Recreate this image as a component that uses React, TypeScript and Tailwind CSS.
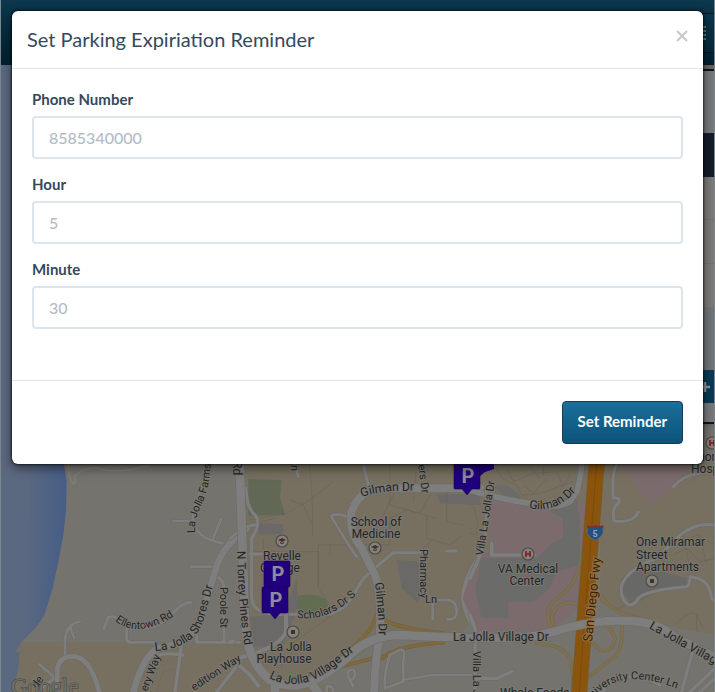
import type { ReactNode } from "react";

const LINE = "#6b6a65";
const ROAD = "#7e7e7e";

function Road({ d, w = 12, color = ROAD, edge = LINE }: { d: string; w?: number; color?: string; edge?: string }) {
  return (
    <g fill="none" strokeLinecap="round" strokeLinejoin="round">
      <path d={d} stroke={edge} strokeWidth={w + 3} />
      <path d={d} stroke={color} strokeWidth={w} />
    </g>
  );
}

function Curve({ id, d, size = 12, fill = "#242424", children }: { id: string; d: string; size?: number; fill?: string; children: ReactNode }) {
  return (
    <>
      <path id={id} d={d} fill="none" stroke="none" />
      <text fontSize={size} fill={fill}>
        <textPath href={"#" + id}>{children}</textPath>
      </text>
    </>
  );
}

function Pin({ x, y }: { x: number; y: number }) {
  return (
    <g transform={`translate(${x} ${y})`}>
      <path d="M1 0H25Q26 0 26 1V25Q26 26 25 26H18L13 32L8 26H1Q0 26 0 25V1Q0 0 1 0Z" fill="#21007d" stroke="#180060" strokeWidth="0.6" />
      <text x="14" y="20" textAnchor="middle" fontSize="20" fontWeight="700" fill="#8d8b9c" stroke="none">P</text>
    </g>
  );
}

function Spot({ x, y, kind }: { x: number; y: number; kind: "school" | "place" | "hospital" }) {
  return (
    <g transform={`translate(${x} ${y})`}>
      <circle r="6" fill="#84827f" stroke="#4d4c49" strokeWidth="1.2" />
      {kind === "school" && <path d="M-4 -1L0 -3L4 -1L0 1ZM-2 1V2Q0 4 2 2V1L0 2Z" fill="#4a3023" />}
      {kind === "place" && <rect x="-2" y="-2" width="4" height="4" fill="#4a3023" />}
      {kind === "hospital" && <path d="M-2 -3V3M2 -3V3M-2 0H2" stroke="#8b1518" strokeWidth="1.6" fill="none" />}
    </g>
  );
}

function CampusMap() {
  return (
    <svg className="absolute inset-0 h-full w-full" viewBox="0 65 715 627" preserveAspectRatio="xMinYMin slice" aria-label="Map of La Jolla" role="img">
      <defs>
        <linearGradient id="sea" x1="0" x2="1" y1="0.2" y2="0.5">
          <stop offset="0.5" stopColor="#5b6980" />
          <stop offset="1" stopColor="#485e87" />
        </linearGradient>
      </defs>
      <rect y="65" width="715" height="627" fill="#75736d" />
      <g transform="translate(0 455) scale(0.33333)">
        <path d="M0 -1170H192V30L200 80L198 170L190 240L175 320L158 400L133 480L110 515L65 560L48 590L60 590L55 640L40 711H0Z" fill="url(#sea)" />
        <path d="M65 562H740L780 600L870 690H1000V711H42L56 640L60 590L50 590Z" fill="#777060" />
        <path d="M735 0H1800V150L1350 560L1170 540L1000 650L860 690L750 590L730 300Z" fill="#777060" />
        <path d="M1800 0H2145V540L1880 490L1800 440Z" fill="#777060" />
      </g>

      {/* West coast */}
      <g transform="translate(0 455) scale(0.33333)">
        <path d="M205 30Q205 70 220 85Q232 80 222 66Q240 42 285 38Q350 60 450 30" stroke="#7f7d78" strokeWidth="5" fill="none" />
        <Road d="M622 0C625 90 578 130 578 195Q585 250 670 265M520 198H575M663 192L640 250M572 335H642" w={8} />
        <Road d="M312 520L325 487Q345 480 362 500Q440 540 490 500L530 463Q550 445 572 442M380 520V555L388 562H460M590 540V562H720M640 362Q672 368 672 400V560" w={9} />
        <Road d="M195 600V555Q200 505 240 500M210 515L223 550M118 628L165 668M165 668L125 700" w={8} />
        <Road d="M172 711V650Q172 605 218 604Q270 604 298 711" w={14} />
        <Road d="M545 565L525 711M450 610Q480 590 548 600M720 620L650 711M720 560" w={10} />
        <path d="M465 670Q470 620 530 618M470 711L490 650L525 640M485 630L515 665" stroke={LINE} strokeWidth="2" fill="none" />
        <Road d="M400 711Q430 600 475 580Q570 565 600 500L645 350Q660 280 740 220" w={20} />
      </g>

      {/* Campus */}
      <g transform="translate(230 455) scale(0.33333)">
        <path d="M55 72L155 75L150 130L165 180L55 182Z" fill="#626856" />
        <path d="M190 455L205 422Q260 412 290 435L298 470L235 478Z" fill="#626c50" />
        <path d="M85 205L160 208L158 238H85ZM60 485L160 480L200 370L205 450L160 570L70 575ZM500 315L575 320L590 410L560 440L515 400ZM620 118H750V150L630 145Z" fill="#6a6967" />
        <path d="M60 195L170 175L240 135L310 80M180 135L220 150L245 205M240 30L248 160V245M90 200L140 190M265 270H380M265 270V400L300 450M300 300V270M60 290H265V390M100 250V390M400 270H480V190L530 165L620 190M590 180V250L660 270L700 240M610 250L570 290M480 30V150L570 175L600 120M650 110V200L700 210M180 570L250 520L345 455M155 570V640M130 600L75 640M560 30L550 140M500 100L450 200" stroke="#69645a" strokeWidth="2" fill="none" />
        <Road d="M48 100Q50 160 75 180Q95 205 65 250V430Q70 480 150 478H300Q350 460 370 420L400 370L440 335L490 293H570M650 288H678M0 250L45 215L75 210M60 297H95" w={9} />
        <Road d="M195 30L205 65M400 30L415 90" w={9} />
        <Road d="M380 305Q365 285 350 260L305 187Q300 178 325 178L355 185" w={8} />
        <Road d="M608 435H650Q680 435 680 470Q680 495 652 493M608 435V493" w={8} />
        <Road d="M168 470V530Q150 580 20 610M20 625L60 660L85 692M0 562L10 560" w={12} />
        <Road d="M440 480Q420 550 310 620L240 665M450 490Q500 520 640 535M455 610Q500 570 640 563M310 640L450 605" w={9} color="#81683b" edge="#70603f" />
        <Road d="M500 590Q530 570 520 620V680L465 700Q460 660 480 600ZM515 675L610 660H750M370 695L355 665Q350 640 370 645Q385 660 360 680M290 711V695Q310 690 310 711" w={8} />
        <Road d="M750 300Q700 380 700 430Q710 500 750 530M735 540V711" w={14} />
        <Road d="M750 100H460Q390 100 365 170Q355 230 395 280L430 350Q455 400 450 540Q435 610 432 720" w={24} />
        <Road d="M28 0L45 500Q50 620 120 675Q180 705 240 680Q310 650 370 590Q430 540 510 540Q630 548 750 548M135 680V720M240 680L270 720" w={26} />
      </g>

      {/* Medical center and freeway */}
      <g transform="translate(470 455) scale(0.33333)">
        <path d="M60 115L175 150L260 140H350L330 450L250 530H20L-22 430L20 300L60 290Z" fill="#7b6b6c" />
        <path d="M455 30H660L625 90L540 148L500 95Z" fill="#7b6b6c" />
        <path d="M35 310H205L245 265L280 250V190L240 170L315 105L330 200V330L260 350L240 400L190 440H115V490H35L15 400ZM70 95L110 90L155 125L130 140Z" fill="#6b6b69" />
        <path d="M455 370Q510 315 580 350L650 370V400L560 410L490 450L455 410Z" fill="#686866" />
        <path d="M75 30Q90 80 140 90L155 120Q220 120 250 100L310 80M110 40L130 80L190 55L260 50L280 95L300 60M160 90L190 115L230 70M220 30V60M180 35L210 70M0 140Q30 180 20 240L0 235M600 270L640 260L680 240L735 270M610 300L650 280L690 320L735 310M640 240L660 340M690 240L710 330M620 505Q660 460 680 480L700 520M680 480V530M440 465L480 440M475 410L490 395" stroke="#68645b" strokeWidth="2" fill="none" />
        <Road d="M335 30Q330 80 320 110L300 140Q250 165 180 145Q80 130 0 105" w={17} />
        <Road d="M50 110V200Q45 280 0 370M0 480L15 520V711M15 550V711M65 300H195M65 300V265M15 670H80L125 650" w={11} />
        <Road d="M440 30Q425 50 430 130Q455 125 445 145Q425 155 432 198Q490 205 505 172M610 95Q640 60 690 55L735 30" w={9} />
        <Road d="M735 210Q670 200 620 250L560 310Q475 340 455 390Q450 430 470 445Q485 460 505 430Q530 405 650 395Q660 390 660 365Q720 370 725 430L735 440" w={9} />
        <Road d="M335 300Q325 390 260 430Q225 460 235 495Q260 560 285 520Q340 510 325 450Q290 430 260 460Q225 500 275 530M390 420Q430 480 510 490M380 510Q420 500 435 550Q430 595 390 585L355 550M455 500Q460 570 440 600L350 670M200 565Q280 570 300 610Q310 650 310 711" w={7} color="#80704c" edge="#6f6753" />
        <path d="M382 0L327 720" stroke="#745b2c" strokeWidth="48" fill="none" />
        <path d="M382 0L327 720" stroke="#8b540c" strokeWidth="42" fill="none" />
        <path d="M382 0L327 720" stroke="#7b4a0b" strokeWidth="3" fill="none" />
        <Road d="M670 580L635 711M735 640L660 711M735 670L690 711M570 690Q480 640 410 690L400 711" w={10} />
        <Road d="M-20 549H130Q200 545 250 530Q380 490 480 498Q560 500 620 550L740 610" w={25} />
        <path d="M352 212Q363 217 376 212Q389 217 400 212L399 235Q391 250 376 257Q359 250 351 235Z" fill="#254f82" stroke="#77736f" strokeWidth="2" />
        <path d="M352 210Q363 215 376 210Q389 215 400 210V219H351Z" fill="#7b3034" />
      </g>

      <g fontFamily='Roboto, "Liberation Sans", sans-serif' fill="#242424" stroke="#7b7973" strokeWidth="2" strokeLinejoin="round" paintOrder="stroke">
        <Curve id="farms" d="M195 533Q194 520 201 506Q212 485 212 440" size={11}>La Jolla Farms Rd</Curve>
        <Curve id="ellen" d="M115 621Q139 640 177 614" size={11}>Ellentown Rd</Curve>
        <Curve id="shores" d="M155 651Q197 648 204 618L216 575">La Jolla Shores Dr</Curve>
        <text transform="translate(220 587) rotate(90)" fontSize="11">Poole St</text>
        <text transform="translate(147 692) rotate(-69)" fontSize="11">ery Way</text>
        <text transform="translate(194 691) rotate(-33)" fontSize="11">edition Way</text>
        <text transform="translate(37 689) rotate(-55)" fontSize="11">de</text>
        <Curve id="torrey" d="M237 551Q238 610 246 655">N Torrey Pines Rd</Curve>
        <text transform="translate(233 461) rotate(90)" fontSize="12">Rd</text>
        <text transform="translate(291 459) rotate(90)" fontSize="11">Ln</text>
        <Curve id="gilmanw" d="M362 497Q383 489 420 491">Gilman Dr</Curve>
        <Curve id="gilmans" d="M375 583Q378 605 379 640">Gilman Dr</Curve>
        <Curve id="gilmane" d="M529 508Q560 515 582 483">Gilman Dr</Curve>
        <text transform="translate(418 465) rotate(82)" fontSize="11">ers Dr</text>
        <text transform="translate(420 549) rotate(90)" fontSize="11">Pharmacy</text>
        <text x="425" y="603" fontSize="11">Ln</text>
        <Curve id="scholars" d="M297 618Q331 622 359 592" size={11}>Scholars Dr S</Curve>
        <Curve id="village1" d="M269 678Q299 693 330 670L365 643">La Jolla Village Dr</Curve>
        <text x="453" y="641" fontSize="12">La Jolla Village Dr</text>
        <Curve id="village2" d="M649 628Q675 643 745 681">La Jolla Village Dr</Curve>
        <text transform="translate(483 556) rotate(-81)" fontSize="11">Villa La Jolla Dr</text>
        <text transform="translate(473 651) rotate(90)" fontSize="11">Villa La J</text>
        <text transform="translate(592 642) rotate(-84)" fontSize="13" fill="#35220a" stroke="#957140">San Diego Fwy</text>
        <Curve id="univ" d="M589 704Q617 662 682 691" size={11}>University Center Ln</Curve>
        <text x="500" y="697" fontSize="12">Whole Foods</text>
        <text x="11" y="694" fontSize="23" fontFamily='"Liberation Serif", serif' fill="#70706a" stroke="#44443f" strokeWidth="1">Google</text>

        <g fontSize="12" textAnchor="middle">
          <text x="376" y="526">School of</text>
          <text x="376" y="538">Medicine</text>
          <text x="282" y="560">Revelle</text>
          <text x="280" y="572">College</text>
          <text x="291" y="651">La Jolla</text>
          <text x="284" y="663">Playhouse</text>
          <text x="528" y="573">VA Medical</text>
          <text x="527" y="585">Center</text>
        </g>
        <g fontSize="12">
          <text x="636" y="546">One Miramar</text>
          <text x="636" y="559">Street</text>
          <text x="636" y="571">Apartments</text>
          <text x="691" y="461">Thornton</text>
          <text x="691" y="473">Hospital</text>
        </g>
        <text x="595" y="537" textAnchor="middle" fontSize="9" fontWeight="700" fill="#9ba4b0" stroke="none">5</text>
      </g>

      <Spot x={282} y={541} kind="school" />
      <Spot x={375} y={548} kind="school" />
      <Spot x={293} y={632} kind="place" />
      <Spot x={652} y={581} kind="place" />
      <Spot x={528} y={554} kind="hospital" />
      <Spot x={712} y={443} kind="hospital" />
      <g fontFamily='Roboto, "Liberation Sans", sans-serif'>
        <path d="M478 455H494V469L485 472L480 476Z" fill="#21007d" />
        <Pin x={454} y={463} />
        <Pin x={264} y={561} />
        <Pin x={262} y={587} />
      </g>
    </svg>
  );
}

function Field({ id, label, placeholder }: { id: string; label: string; placeholder: string }) {
  return (
    <div className="flex flex-col gap-[7px]">
      <label htmlFor={id} className="text-[15px] leading-5 font-bold text-[#34495e]">{label}</label>
      <input id={id} type="text" placeholder={placeholder} className="h-[43px] w-full rounded border-2 border-[#dce4ec] bg-white px-[15px] text-base text-[#34495e] outline-none placeholder:font-medium placeholder:text-[#b2bcc5]" />
    </div>
  );
}

export default function App() {
  return (
    <div className='relative flex min-h-screen flex-col overflow-hidden font-[Lato,"Open_Sans",sans-serif]'>
      <header className="flex h-[65px] items-center justify-end bg-linear-to-b from-[#0c384e] to-[#02202f]">
        <button type="button" aria-label="Toggle navigation" className="flex h-10 w-12 flex-col items-end justify-center gap-0.5 border border-[#03151f] bg-linear-to-b from-[#0b354b] to-[#05293c] pr-2">
          <span className="h-0.5 w-5 bg-[#66777f]" />
          <span className="h-0.5 w-5 bg-[#66777f]" />
          <span className="h-0.5 w-5 bg-[#66777f]" />
          <span className="h-0.5 w-5 bg-[#66777f]" />
        </button>
      </header>

      <main className="relative flex-1">
        <CampusMap />
        <aside className="relative ml-auto w-48 border-t-4 border-[#6b6561] shadow-md">
          <div className="border-y-2 border-[#10151a]">
            <div className="h-[62px] bg-[#77797b]" />
            <div className="h-11 bg-[#141c29]" />
            <div className="h-[43px] border-b border-[#737170] bg-[#7d7b7a]" />
            <div className="h-11 border-b border-[#737170] bg-[#7d7b7a]" />
            <div className="h-[43px] bg-[#7d7b7a]" />
            <div className="h-[63px] bg-[#727577]" />
            <button type="button" aria-label="Add" className="flex h-[33px] w-full items-center justify-end bg-[#0a3a55] pr-1">
              <svg className="size-3" viewBox="0 0 12 12" aria-hidden="true">
                <path d="M6 1V11M1 6H11" stroke="#8b979f" strokeWidth="2.5" />
              </svg>
            </button>
            <div className="h-[19px] bg-[#79797d]" />
          </div>
        </aside>
      </main>

      <div className="absolute inset-0 border-x border-[#7c8790] px-[11px] pt-[11px]">
        <section role="dialog" aria-labelledby="reminder-title" className="rounded-md bg-white shadow-[0_0_2px_1px_rgba(0,0,0,0.55),0_4px_12px_rgba(0,0,0,0.5)]">
          <div className="flex h-[58px] items-start justify-between border-b border-[#e5e5e5] px-[15px] pt-3.5">
            <h1 id="reminder-title" className="text-xl leading-7 text-[#34495e]">Set Parking Expiriation Reminder</h1>
            <button type="button" aria-label="Close" className="flex h-[22px] items-center">
              <svg className="size-3" viewBox="0 0 12 12" aria-hidden="true">
                <path d="M1 1L11 11M11 1L1 11" stroke="#c8c8c8" strokeWidth="2" />
              </svg>
            </button>
          </div>
          <form onSubmit={(e) => e.preventDefault()}>
            <div className="flex flex-col gap-[15px] px-5 pt-5 pb-[51px]">
              <Field id="phone" label="Phone Number" placeholder="8585340000" />
              <Field id="hour" label="Hour" placeholder="5" />
              <Field id="minute" label="Minute" placeholder="30" />
            </div>
            <div className="flex justify-end border-t border-[#e5e5e5] px-5 pt-5 pb-5">
              <button type="submit" className="h-[43px] rounded border border-[#1c3a50] bg-linear-to-b from-[#1a6f9c] to-[#0c5378] px-[15px] pb-0.5 text-[15px] font-bold text-white">Set Reminder</button>
            </div>
          </form>
        </section>
      </div>
    </div>
  );
}
